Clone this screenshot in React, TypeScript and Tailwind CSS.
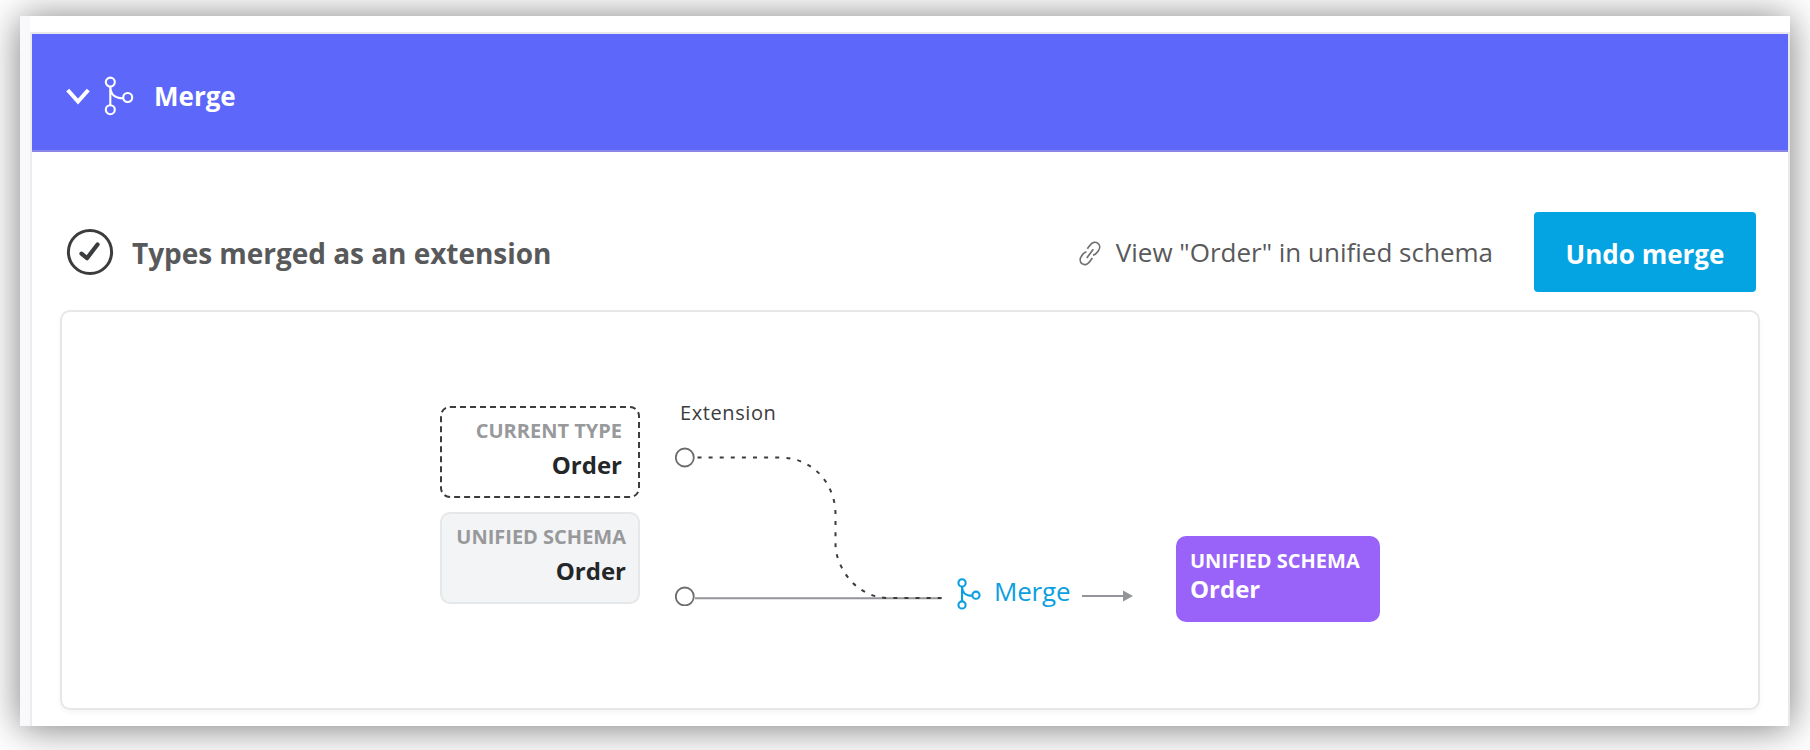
function MergeIcon({ className, strokeWidth }: { className: string; strokeWidth: number }) {
  return (
    <svg viewBox="0 0 30 40" className={className} fill="none" stroke="currentColor" strokeWidth={strokeWidth}>
      <circle cx="6.3" cy="6.1" r="4.5" />
      <circle cx="6.3" cy="33.7" r="4.5" />
      <circle cx="23.7" cy="21.5" r="4.5" />
      <path d="M6.3 10.6V29.2M6.3 10.6C6.5 18.5 10 22.2 19.2 22.2" />
    </svg>
  );
}

function LinkIcon() {
  return (
    <svg viewBox="0 0 24 26" className="mt-[3px] h-[26px] w-6 shrink-0" fill="none" stroke="#6f7072" strokeWidth="1.7">
      <path d="M8.3 7.8 11.2 3.9C13.4 1 16.6.5 18.9 2.3C21.2 4.1 21.2 7.3 19.2 10L18 11.6C17 13 15.6 13.9 14 14.2" />
      <path d="M7.5 10.7C6 11.1 4.9 11.9 4 13.1L2.6 15C.6 17.7.8 20.9 3 22.7C5.2 24.4 8.4 23.8 10.4 21.1L13.4 17.1" />
      <path d="M7.8 17 14.3 8.2" />
    </svg>
  );
}

function Header() {
  return (
    <header className="flex h-[118px] items-center border-b-2 border-[#8a86e6] bg-[#5d68fb] pl-[34px] text-white">
      <svg viewBox="0 0 24 18" className="mt-[10px] h-[18px] w-6" fill="none" stroke="currentColor" strokeWidth="4">
        <path d="M1.7 2 12 13.6 22.3 2" />
      </svg>
      <MergeIcon className="ml-[14px] mt-[7px] h-10 w-[30px]" strokeWidth={2.1} />
      <h1 className="ml-5 mt-2 text-[26px] font-bold leading-9">Merge</h1>
    </header>
  );
}

function Toolbar() {
  return (
    <div className="flex h-20 items-center pl-[34px] pr-8">
      <svg viewBox="0 0 48 48" className="size-12" fill="none" stroke="#3b3c3d" strokeLinecap="round" strokeLinejoin="round">
        <circle cx="24" cy="24" r="21.6" strokeWidth="3" />
        <path d="M15.5 25.7 21 30.2 31.5 16.5" strokeWidth="4.2" />
      </svg>
      <h2 className="ml-[18px] mt-[2px] text-[28px] font-bold leading-10 tracking-[-0.04px] text-[#58595b]">
        Types merged as an extension
      </h2>
      <a className="ml-auto flex items-center gap-[13px] text-[26px] leading-9 text-[#58595b]">
        <LinkIcon />
        View "Order" in unified schema
      </a>
      <button className="ml-[41px] flex h-20 w-[222px] items-center justify-center rounded bg-[#04a3e1] pt-1 text-[26px] font-bold text-white">
        Undo merge
      </button>
    </div>
  );
}

function Connectors() {
  return (
    <svg viewBox="0 0 272 160" className="mt-[18px] h-40 w-[272px]" fill="none">
      <path d="M20 152.3H266.5" stroke="#939598" strokeWidth="2" />
      <path
        d="M22.5 11.5H104C142 11.5 160.5 42 160.5 68V98C160.5 120 180 152 214 152H266.5"
        stroke="#3b3c3d"
        strokeWidth="2"
        strokeDasharray="4 7.1"
      />
      <circle cx="9.8" cy="11.5" r="9" fill="#fff" stroke="#6b6c6d" strokeWidth="1.8" />
      <circle cx="9.8" cy="150.5" r="9" fill="#fff" stroke="#6b6c6d" strokeWidth="1.8" />
    </svg>
  );
}

function Diagram() {
  return (
    <section className="mx-7 mt-[18px] flex h-[400px] items-start rounded-[10px] border-2 border-[#e6e7e8] pl-[378px] shadow-[0_3px_5px_rgba(0,0,0,0.04)]">
      <div className="mt-[94px] flex flex-col gap-[14px] text-right font-bold">
        <div className="relative h-[92px] w-[200px] pr-[18px] pt-[10px]">
          <svg className="absolute inset-0 size-full" fill="none">
            <rect x="1" y="1" width="198" height="90" rx="9" stroke="#3b3c3d" strokeWidth="2" strokeDasharray="6 4" />
          </svg>
          <div className="text-[20px] leading-[30px] text-[#98999b]">CURRENT TYPE</div>
          <div className="mt-[3px] text-[24px] leading-8 text-[#242628]">Order</div>
        </div>
        <div className="h-[92px] w-[200px] rounded-[10px] border-2 border-[#e6e7e8] bg-[#f3f4f6] pr-3 pt-2">
          <div className="text-[20px] leading-[30px] text-[#98999b]">UNIFIED SCHEMA</div>
          <div className="mt-[3px] text-[24px] leading-8 text-[#242628]">Order</div>
        </div>
      </div>
      <div className="ml-[35px] mt-[76px]">
        <div className="pl-[5px] pt-[10px] text-[20px] leading-[30px] tracking-[0.6px] text-[#3b3c3d]">Extension</div>
        <Connectors />
      </div>
      <div className="mt-[258px] flex h-10 items-center text-[#0c9fdf]">
        <MergeIcon className="ml-[10px] mt-[8px] h-[32px] w-6" strokeWidth={2.6} />
        <span className="ml-[13px] mt-px text-[26px] leading-9 tracking-[-0.2px]">Merge</span>
        <svg viewBox="0 0 52 12" className="ml-3 mt-3 h-3 w-[52px]">
          <path d="M0 6H42" stroke="#939598" strokeWidth="2" />
          <path d="M41 .5 51 6 41 11.5Z" fill="#939598" />
        </svg>
      </div>
      <div className="ml-auto mr-[378px] mt-[224px] h-[86px] w-[204px] rounded-[10px] bg-[#9963fa] pl-[14px] pt-[10px] font-bold text-white">
        <div className="text-[20px] leading-[30px]">UNIFIED SCHEMA</div>
        <div className="-mt-px text-[24px] leading-7">Order</div>
      </div>
    </section>
  );
}

export default function App() {
  return (
    <div className="h-[750px] w-[1810px] overflow-hidden bg-white px-5 pt-4 font-['Open_Sans',sans-serif]">
      <main className="flex h-[710px] w-[1770px] bg-white shadow-[0_2px_36px_rgba(0,0,0,0.52)]">
        <div className="w-[10px] bg-[#f9f9fc]" />
        <div className="mt-4 w-[2px] bg-[#ececee]" />
        <div className="mt-4 flex-1 border-r-2 border-t-2 border-[#e9e9eb]">
          <Header />
          <div className="pt-[60px]">
            <Toolbar />
            <Diagram />
          </div>
        </div>
      </main>
    </div>
  );
}
